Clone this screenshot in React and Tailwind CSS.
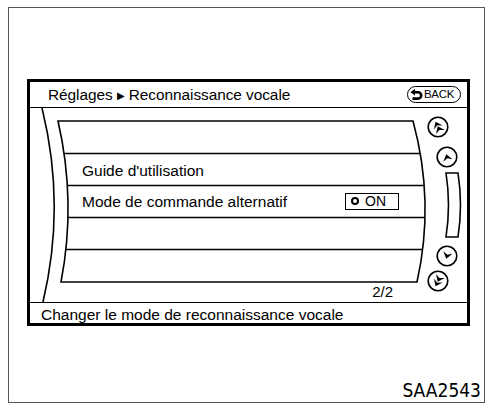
import React from "react";

function Arrowhead({ cx, cy, rot = 0, dy = 0 }) {
  return (
    <path
      transform={`translate(${cx} ${cy}) rotate(${rot}) translate(0 ${dy})`}
      d="M-4.8 3 L0 -3.4 L4.8 3 L0 0.6 Z"
      fill="#000"
    />
  );
}

function ScrollButton({ cx, cy, dir, double, rot }) {
  const r = dir === "down" ? 180 : 0;
  return (
    <g>
      <circle cx={cx} cy={cy} r="9.8" fill="white" stroke="#000" strokeWidth="1.6" />
      {double ? (
        <>
          <Arrowhead cx={cx} cy={cy} rot={r + rot} dy={-2.4} />
          <Arrowhead cx={cx} cy={cy} rot={r + rot} dy={2.6} />
        </>
      ) : (
        <Arrowhead cx={cx} cy={cy} rot={r + rot} dy={0.6} />
      )}
    </g>
  );
}

function ContentDrawing() {
  const panel = "M28 13 L383 13 Q405 93.5 387 174 L31 174 Q46.5 93.5 28 13 Z";
  return (
    <svg
      className="absolute inset-0"
      width="437"
      height="194"
      viewBox="0 0 437 194"
    >
      <defs>
        <clipPath id="panelClip">
          <path d={panel} />
        </clipPath>
      </defs>
      <path d="M12 0 Q36 97 13 194" fill="none" stroke="#000" strokeWidth="1.6" />
      <path d={panel} fill="none" stroke="#000" strokeWidth="1.6" />
      <g clipPath="url(#panelClip)" stroke="#000" strokeWidth="1.6">
        <line x1="0" y1="45.5" x2="437" y2="45.5" />
        <line x1="0" y1="77.5" x2="437" y2="77.5" />
        <line x1="0" y1="109.5" x2="437" y2="109.5" />
        <line x1="0" y1="141.5" x2="437" y2="141.5" />
      </g>
      <ScrollButton cx={408} cy={19} double rot={-25} />
      <ScrollButton cx={417} cy={49} rot={-15} />
      <path
        d="M416 65 Q421 97 416 129 L428 129 Q433 97 428 65 Z"
        fill="white"
        stroke="#000"
        strokeWidth="1.6"
      />
      <ScrollButton cx={417} cy={148} dir="down" rot={15} />
      <ScrollButton cx={408} cy={173} dir="down" double rot={25} />
    </svg>
  );
}

function BackIcon() {
  return (
    <svg width="13" height="12" viewBox="0 0 13 12">
      <path
        d="M4 3.2 H8 A3.2 3.2 0 0 1 8 9.6 H2.5"
        fill="none"
        stroke="#000"
        strokeWidth="2.6"
      />
      <path d="M0.5 3.2 L5 -0.2 L5 6.6 Z" fill="#000" />
    </svg>
  );
}

export default function App() {
  return (
    <div className="w-[492px] h-[406px] bg-white pt-[7px] pl-[8px] font-['Liberation_Sans',Arial,sans-serif] text-black">
      <div className="w-[477px] h-[396px] border border-[#555] flex flex-col pt-[71px] pl-[18px] pr-[2px] pb-[2px]">
        <div className="w-[443px] h-[247px] border-[3px] border-black flex flex-col">
          <div className="h-[26px] border-b-[1.5px] border-black flex items-center justify-between pl-[18px] pr-[6px]">
            <span className="text-[15.4px] leading-none tracking-[-0.05px]">
              Réglages{" "}
              <span className="font-['DejaVu_Sans',sans-serif] text-[10px] relative top-[-1px]">▶</span>{" "}
              Reconnaissance vocale
            </span>
            <div className="w-[54px] h-[17px] rounded-full border-[1.5px] border-black flex items-center pl-[2px] gap-[1px]">
              <BackIcon />
              <span className="text-[11.5px] leading-none tracking-[-0.3px]">BACK</span>
            </div>
          </div>
          <div className="relative h-[194px]">
            <ContentDrawing />
            <div className="relative flex flex-col pt-[13px]">
              <div className="h-[32px]" />
              <div className="h-[32px] flex items-center pl-[52px] text-[15.5px] leading-none">
                <span className="mt-[3px]">Guide d'utilisation</span>
              </div>
              <div className="h-[32px] flex items-center pl-[52px] text-[15.5px] leading-none">
                <span className="w-[263px] mt-[2px]">Mode de commande alternatif</span>
                <span className="w-[54px] h-[17px] border-[1.5px] border-black flex items-center pl-[5px] gap-[6px] text-[14px] leading-none">
                  <span className="w-[8px] h-[8px] rounded-full border-[2px] border-black" />
                  <span>ON</span>
                </span>
              </div>
              <div className="h-[32px]" />
              <div className="h-[32px]" />
              <div className="h-[20px] w-[363px] flex items-center justify-end text-[15px] leading-none">
                2/2
              </div>
            </div>
          </div>
          <div className="flex-1 border-t-[1.5px] border-black flex items-center pl-[11px] pt-[3px] text-[15.5px] leading-none">
            Changer le mode de reconnaissance vocale
          </div>
        </div>
        <div className="flex-1" />
        <div className="self-end pr-[1px] text-[19px] leading-none font-['DejaVu_Sans_Condensed','DejaVu_Sans',sans-serif]">
          SAA2543
        </div>
      </div>
    </div>
  );
}
